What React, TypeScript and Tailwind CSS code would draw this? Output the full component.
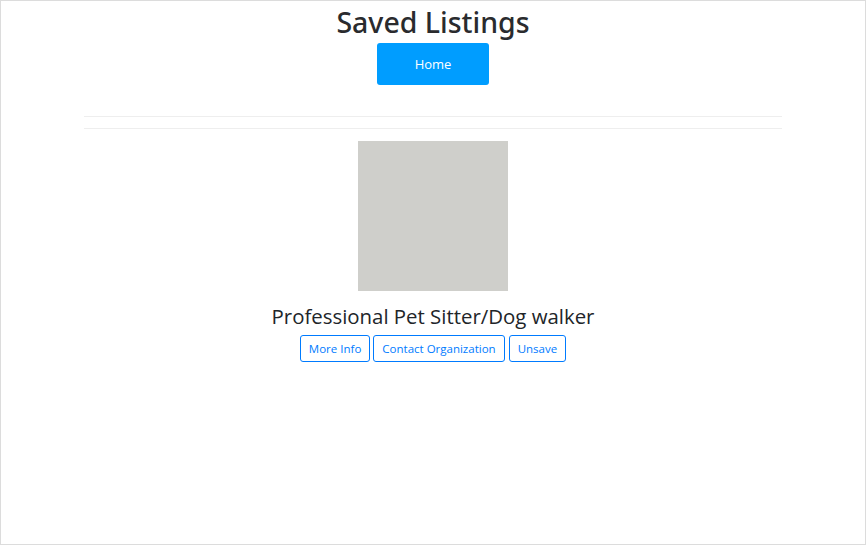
const font = { fontFamily: '"Open Sans", "Noto Sans", sans-serif' };

const ListingCard = ({ title }: { title: string }) => {
    return (
        <div className="flex flex-col items-center">
            <div className="w-[150px] h-[150px] bg-[#cfcfcb]" />
            <h5 className="mt-[12px] text-[20.4px] leading-[26px] text-[#212529]">
                {title}
            </h5>
            <div className="mt-[6px] flex gap-[3px]">
                <button className="h-[27px] px-[8px] rounded-[3px] border border-[#007bff] text-[#007bff] text-[11.5px] bg-white">
                    More Info
                </button>
                <button className="h-[27px] px-[8px] rounded-[3px] border border-[#007bff] text-[#007bff] text-[11.5px] bg-white">
                    Contact Organization
                </button>
                <button className="ml-[1px] h-[27px] px-[8px] rounded-[3px] border border-[#007bff] text-[#007bff] text-[11.5px] bg-white">
                    Unsave
                </button>
            </div>
        </div>
    );
};

export default function App() {
    return (
        <div
            style={font}
            className="h-[545px] w-[866px] border border-[#dcdcdc] bg-white overflow-hidden"
        >
            <div className="flex flex-col items-center">
                <h1
                    style={{ fontFamily: '"Noto Sans", "Open Sans", sans-serif' }}
                    className="mt-[2px] text-[28.5px] leading-[38px] font-medium text-[#2a2b2e]"
                >
                    Saved Listings
                </h1>
                <button className="mt-[2px] w-[112px] h-[42px] pt-[2px] rounded-[3px] bg-[#009dff] text-white text-[13px] font-medium">
                    Home
                </button>
            </div>
            <div className="mx-[83px] mt-[31px] border-t border-[#eeeeee]" />
            <div className="mx-[83px] mt-[11px] border-t border-[#eeeeee]" />
            <div className="mt-[12px]">
                <ListingCard title="Professional Pet Sitter/Dog walker" />
            </div>
        </div>
    );
}
